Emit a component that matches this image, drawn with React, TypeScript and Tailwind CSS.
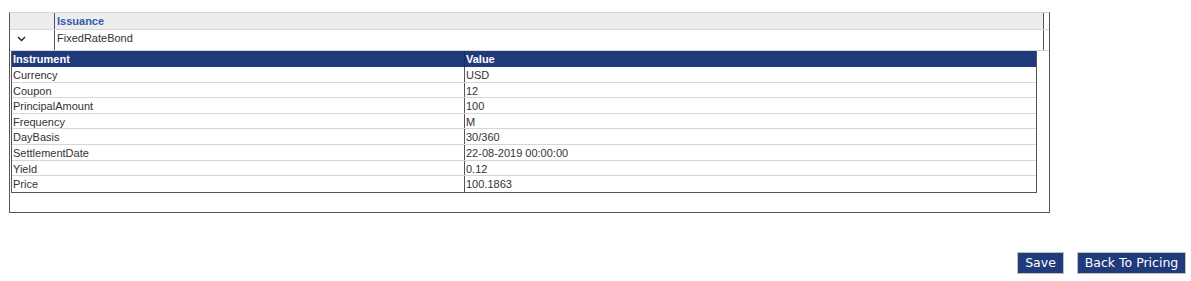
import React from "react"

const rows: [string, string][] = [
  ["Currency", "USD"],
  ["Coupon", "12"],
  ["PrincipalAmount", "100"],
  ["Frequency", "M"],
  ["DayBasis", "30/360"],
  ["SettlementDate", "22-08-2019 00:00:00"],
  ["Yield", "0.12"],
  ["Price", "100.1863"],
]

function Chevron() {
  return (
    <svg width="9" height="6" viewBox="0 0 9 6" className="block">
      <path d="M1 1 L4.5 4.5 L8 1" fill="none" stroke="#222" strokeWidth="1.4" />
    </svg>
  )
}

export default function App() {
  return (
    <div className="w-[1191px] h-[281px] bg-white font-['Liberation_Sans',Arial,sans-serif] text-[11px] text-[#333]">
      <div className="pt-[12px] pl-[9px]">
        {/* outer grid box */}
        <div className="w-[1041px] h-[201px] border-t border-t-[#d6d6d6] border-l border-r border-b border-[#555]">
          {/* header row */}
          <div className="flex h-[17px] border-b border-[#d6d6d6]">
            <div className="flex flex-1 bg-[#ededed]">
              <div className="w-[44px]" />
              <div className="border-l border-[#3a4f8a] pl-[2px] leading-[17px] font-bold text-[#2f5caa]">Issuance</div>
            </div>
            <div className="w-[1px] bg-[#555]" />
            <div className="w-[5px]" />
          </div>
          {/* instrument row */}
          <div className="flex h-[21px] border-b border-[#d6d6d6]">
            <div className="flex flex-1">
              <div className="w-[44px] flex items-start pl-[7px] pt-[6px]">
                <Chevron />
              </div>
              <div className="border-l border-[#555] pl-[2px] leading-[16px]">FixedRateBond</div>
            </div>
            <div className="w-[1px] bg-[#555]" />
            <div className="w-[5px]" />
          </div>
          {/* nested table */}
          <div className="ml-[1px] w-[1026px] border-l border-r border-b border-[#555]">
            <div className="flex h-[16px] bg-[#213a7b] text-white font-bold leading-[17px]">
              <div className="w-[452px] pl-[1px]">Instrument</div>
              <div className="border-l border-[#1a2d60] pl-[1px]">Value</div>
            </div>
            {rows.map(([k, v], i) => (
              <div
                key={k}
                className={`flex h-[15.6px] leading-[17px] ${i < rows.length - 1 ? "border-b border-[#d6d6d6]" : ""}`}
              >
                <div className="w-[452px] pl-[1px]">{k}</div>
                <div className="border-l border-[#555] pl-[1px]">{v}</div>
              </div>
            ))}
          </div>
        </div>
      </div>
      {/* action buttons */}
      <div className="flex justify-end gap-[13px] pr-[5px] pt-[39px] font-['DejaVu_Sans',Verdana,sans-serif] text-[12.5px] text-white">
        <button className="h-[22px] w-[47px] border border-[#c0c0c0] bg-[#213a7b]">Save</button>
        <button className="h-[22px] w-[109px] border border-[#c0c0c0] bg-[#213a7b]">Back To Pricing</button>
      </div>
    </div>
  )
}
